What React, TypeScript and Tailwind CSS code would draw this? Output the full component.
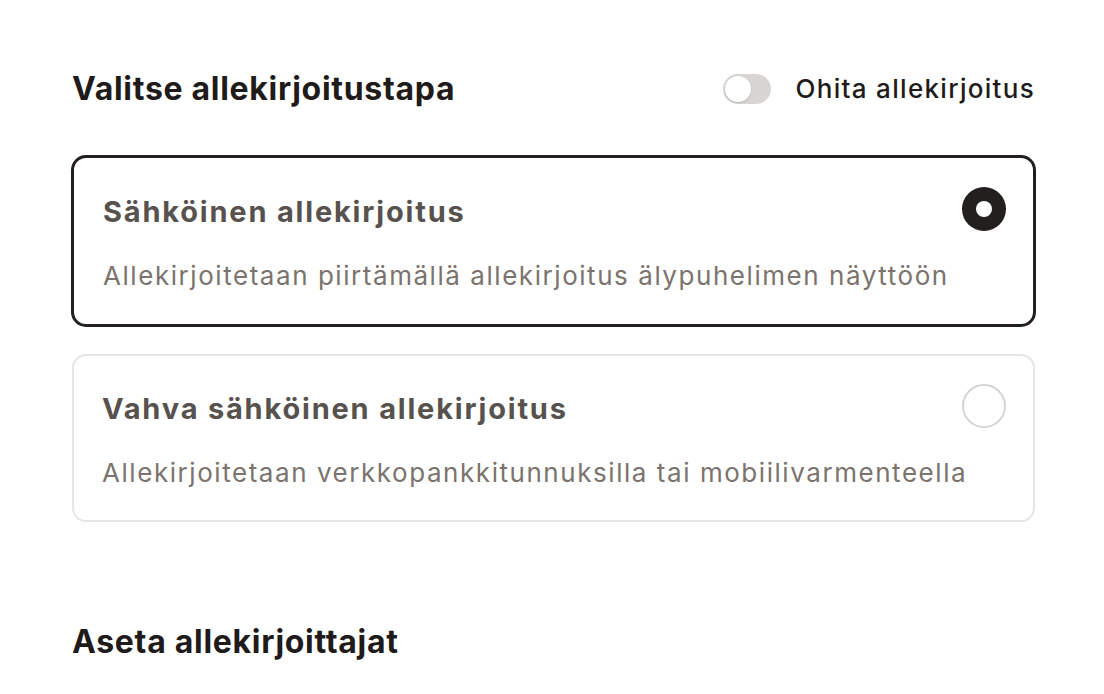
import React from "react";

export default function App() {
  return (
    <div
      className="min-h-[694px] w-[1104px] bg-white"
      style={{ fontFamily: "Inter, 'Noto Sans', sans-serif" }}
    >
      <div className="ml-[72px] w-[963px] pt-[69px]">
        <div className="flex items-center justify-between">
          <h2 className="text-[32px] leading-[40px] font-bold text-[#1f1b1a] tracking-[0.7px]">
            Valitse allekirjoitustapa
          </h2>
          <div className="flex items-center gap-[25px]">
            <div className="relative h-[30px] w-[48px] rounded-full bg-[#d8d5d3]">
              <div className="absolute left-[2px] top-[2px] h-[26px] w-[26px] rounded-full bg-white shadow-[0_1px_2px_rgba(0,0,0,0.15)]" />
            </div>
            <span className="text-[26px] leading-[40px] font-medium text-[#1f1b1a] tracking-[1.3px]">
              Ohita allekirjoitus
            </span>
          </div>
        </div>

        <div className="mt-[46px] -mx-[1px] flex items-start justify-between rounded-[15px] border-[3px] border-[#231f1f] pl-[29px] pr-[27px] pt-[29px] pb-[30px]">
          <div className="min-w-0">
            <div className="pt-[5px] whitespace-nowrap text-[29px] leading-[40px] font-bold text-[#57524e] tracking-[1.8px]">
              Sähköinen allekirjoitus
            </div>
            <div className="mt-[26px] whitespace-nowrap text-[26px] leading-[36px] text-[#7a736e] tracking-[1.55px]">
              Allekirjoitetaan piirtämällä allekirjoitus älypuhelimen näyttöön
            </div>
          </div>
          <div className="flex h-[44px] w-[44px] shrink-0 items-center justify-center rounded-full bg-[#231f1f]">
            <div className="h-[16px] w-[16px] rounded-full bg-white" />
          </div>
        </div>

        <div className="mt-[27px] flex items-start justify-between rounded-[14px] border-2 border-[#e8e5e3] pl-[28px] pr-[27px] pt-[28px] pb-[29px]">
          <div className="min-w-0">
            <div className="pt-[5px] whitespace-nowrap text-[29px] leading-[40px] font-bold text-[#57524e] tracking-[1.8px]">
              Vahva sähköinen allekirjoitus
            </div>
            <div className="mt-[26px] whitespace-nowrap text-[26px] leading-[36px] text-[#7a736e] tracking-[1.55px]">
              Allekirjoitetaan verkkopankkitunnuksilla tai mobiilivarmenteella
            </div>
          </div>
          <div className="h-[44px] w-[44px] shrink-0 rounded-full border-2 border-[#d6d3d1]" />
        </div>

        <h2 className="mt-[100px] text-[32px] leading-[40px] font-bold text-[#1f1b1a] tracking-[0.7px]">
          Aseta allekirjoittajat
        </h2>
      </div>
    </div>
  );
}
